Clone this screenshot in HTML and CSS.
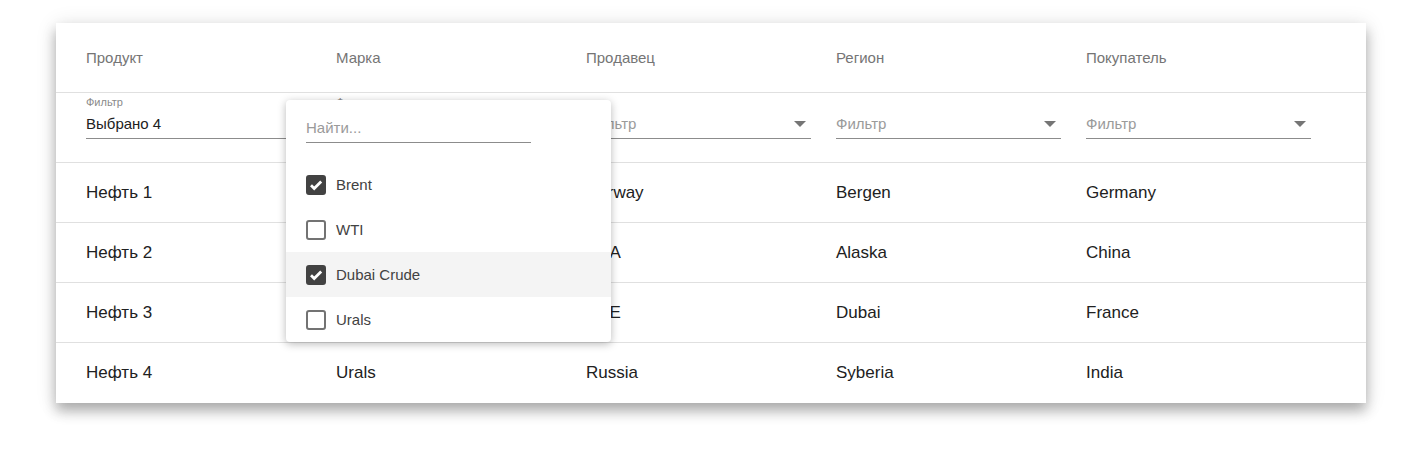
FILE: index.html
```html
<!DOCTYPE html>
<html lang="ru">
<head>
<meta charset="utf-8">
<link rel="stylesheet" href="styles.css">
</head>
<body>
<div class="page">
  <div class="card">
    <div class="row head">
      <div class="cell">Продукт</div>
      <div class="cell">Марка</div>
      <div class="cell">Продавец</div>
      <div class="cell">Регион</div>
      <div class="cell">Покупатель</div>
    </div>
    <div class="row filters">
      <div class="cell">
        <div class="field">
          <span class="flabel">Фильтр</span>
          <span class="fvalue">Выбрано 4</span>
        </div>
      </div>
      <div class="cell anchor">
        <div class="field">
          <span class="flabel">Фильтр</span>
          <span class="fvalue"></span>
        </div>
        <div class="menu">
          <div class="search"><span>Найти...</span></div>
          <div class="opt"><span class="cb on"><svg viewBox="0 0 20 20"><path d="M5 10.3l3.2 3.2L15.2 6.5" fill="none" stroke="#fff" stroke-width="2.8"/></svg></span>Brent</div>
          <div class="opt"><span class="cb"></span>WTI</div>
          <div class="opt hl"><span class="cb on"><svg viewBox="0 0 20 20"><path d="M5 10.3l3.2 3.2L15.2 6.5" fill="none" stroke="#fff" stroke-width="2.8"/></svg></span>Dubai Crude</div>
          <div class="opt"><span class="cb"></span>Urals</div>
        </div>
      </div>
      <div class="cell">
        <div class="field">
          <span class="fph">Фильтр</span><span class="arrow"></span>
        </div>
      </div>
      <div class="cell">
        <div class="field">
          <span class="fph">Фильтр</span><span class="arrow"></span>
        </div>
      </div>
      <div class="cell">
        <div class="field">
          <span class="fph">Фильтр</span><span class="arrow"></span>
        </div>
      </div>
    </div>
    <div class="row data">
      <div class="cell">Нефть 1</div>
      <div class="cell">Brent</div>
      <div class="cell">Norway</div>
      <div class="cell">Bergen</div>
      <div class="cell">Germany</div>
    </div>
    <div class="row data">
      <div class="cell">Нефть 2</div>
      <div class="cell">WTI</div>
      <div class="cell">USA</div>
      <div class="cell">Alaska</div>
      <div class="cell">China</div>
    </div>
    <div class="row data">
      <div class="cell">Нефть 3</div>
      <div class="cell">Dubai Crude</div>
      <div class="cell">UAE</div>
      <div class="cell">Dubai</div>
      <div class="cell">France</div>
    </div>
    <div class="row data last">
      <div class="cell">Нефть 4</div>
      <div class="cell">Urals</div>
      <div class="cell">Russia</div>
      <div class="cell">Syberia</div>
      <div class="cell">India</div>
    </div>
  </div>
</div>
</body>
</html>
```
FILE: styles.css
```css
html, body {
  margin: 0;
  padding: 0;
  background: #fff;
}
body {
  font-family: "Liberation Sans", Arial, sans-serif;
  color: #212121;
}
.page {
  padding: 23px 0 40px 56px;
}
.card {
  width: 1310px;
  background: #fff;
  box-shadow: 0 8px 12px rgba(0,0,0,0.28), 0 2px 20px rgba(0,0,0,0.12);
}
.row {
  display: grid;
  grid-template-columns: repeat(5, 250px);
  padding: 0 30px;
  border-bottom: 1px solid #e0e0e0;
  align-items: center;
}
.row.last {
  border-bottom: none;
  height: 60px;
}
.head {
  height: 69px;
  font-size: 15px;
  color: #757575;
}
.filters {
  height: 69px;
  align-items: start;
}
.data {
  height: 59px;
  font-size: 17px;
}
.cell {
  position: relative;
}
.field {
  width: 225px;
  height: 45px;
  border-bottom: 1px solid #8c8c8c;
  position: relative;
  display: flex;
  align-items: flex-end;
}
.flabel {
  position: absolute;
  left: 0;
  top: 3px;
  font-size: 11px;
  color: #8a8a8a;
}
.fvalue {
  font-size: 15px;
  color: #212121;
  line-height: 17px;
  padding-bottom: 6px;
}
.fph {
  font-size: 15px;
  color: #9a9a9a;
  line-height: 17px;
  padding-bottom: 6px;
  flex: 1;
}
.arrow {
  width: 0;
  height: 0;
  border-left: 6px solid transparent;
  border-right: 6px solid transparent;
  border-top: 6px solid #757575;
  margin: 0 5px 11px 0;
}
.menu {
  position: absolute;
  left: -50px;
  top: 7px;
  width: 325px;
  background: #fff;
  border-radius: 4px;
  box-shadow: 0 2px 8px rgba(0,0,0,0.28);
  z-index: 5;
}
.search {
  margin: 0 80px 19px 20px;
  height: 42px;
  border-bottom: 1px solid #8c8c8c;
  display: flex;
  align-items: flex-end;
}
.search span {
  font-size: 15px;
  color: #9a9a9a;
  line-height: 17px;
  padding-bottom: 6px;
}
.opt {
  height: 45px;
  display: flex;
  align-items: center;
  padding-left: 20px;
  font-size: 15px;
  color: #424242;
}
.opt:last-child {
  border-radius: 0 0 4px 4px;
}
.opt.hl {
  background: #f4f4f4;
}
.cb {
  width: 16px;
  height: 16px;
  border: 2px solid #737373;
  border-radius: 3px;
  margin-right: 10px;
  display: flex;
}
.cb.on {
  background: #424242;
  border-color: #424242;
}
.cb svg {
  width: 20px;
  height: 20px;
  margin: -2px;
}
```
